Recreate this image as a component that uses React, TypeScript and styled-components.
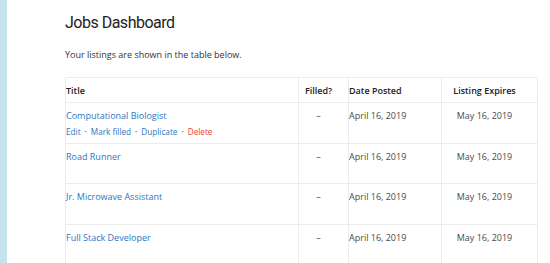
import styled, { createGlobalStyle } from 'styled-components';

const GlobalStyle = createGlobalStyle`
    body {
        margin: 0;
        background: #fff;
        font-family: "Open Sans", "Liberation Sans", sans-serif;
    }
`

const Page = styled.div`
    display: flex;
    min-height: 263px;
`

const SideStrip = styled.div`
    width: 7px;
    flex-shrink: 0;
    background: #c4e3ee;
`

const Content = styled.main`
    flex: 1;
    padding: 11px 13px 0 58px;
`

const Heading = styled.h1`
    margin: 0;
    font-family: Roboto, "Liberation Sans", sans-serif;
    font-weight: 400;
    font-size: 16px;
    letter-spacing: -0.5px;
    line-height: 24px;
    color: #222;
`

const Intro = styled.p`
    margin: 12px 0 14px 0;
    font-size: 9px;
    line-height: 16px;
    color: #333;
`

const Table = styled.table`
    width: 472px;
    border-collapse: collapse;
    table-layout: fixed;
    font-size: 9px;
    color: #4a4a4a;
`

const HeadCell = styled.th<{ $w: number; $align?: string }>`
    box-sizing: border-box;
    width: ${p => p.$w}px;
    height: 25px;
    padding: 0 ${p => (p.$align === 'center' ? '10px' : '0')} 0 0;
    border: 1px solid #ececec;
    text-align: ${p => p.$align || 'left'};
    font-weight: 600;
    color: #222;
`

const Cell = styled.td<{ $align?: string }>`
    box-sizing: border-box;
    height: 40.6px;
    padding: 5px ${p => (p.$align === 'center' ? '10px' : '0')} 0 0;
    vertical-align: top;
    border: 1px solid #ececec;
    text-align: ${p => p.$align || 'left'};
    line-height: 16px;
`

const JobLink = styled.a`
    color: #2d76c2;
    text-decoration: none;
`

const Actions = styled.ul`
    display: flex;
    margin: 0;
    padding: 0;
    list-style: none;
    font-size: 8.2px;
    line-height: 16px;
`

const ActionItem = styled.li`
    &:not(:last-child)::after {
        content: "•";
        color: #777;
        font-size: 6px;
        margin: 0 4px;
        vertical-align: 1px;
    }
`

const ActionLink = styled.a<{ $danger?: boolean }>`
    color: ${p => (p.$danger ? '#ee3b3b' : '#2d76c2')};
    text-decoration: none;
`

const jobs = [
    { id: 1, title: 'Computational Biologist', actions: true },
    { id: 2, title: 'Road Runner', actions: false },
    { id: 3, title: 'Jr. Microwave Assistant', actions: false },
    { id: 4, title: 'Full Stack Developer', actions: false },
]

export default function App() {
    return (
        <Page>
            <GlobalStyle />
            <SideStrip />
            <Content>
                <Heading>Jobs Dashboard</Heading>
                <Intro>Your listings are shown in the table below.</Intro>
                <Table>
                    <thead>
                        <tr>
                            <HeadCell $w={233}>Title</HeadCell>
                            <HeadCell $w={50} $align="center">Filled?</HeadCell>
                            <HeadCell $w={93}>Date Posted</HeadCell>
                            <HeadCell $w={96} $align="center">Listing Expires</HeadCell>
                        </tr>
                    </thead>
                    <tbody>
                        {jobs.map(job =>
                            <tr key={job.id}>
                                <Cell>
                                    <JobLink href="#">{job.title}</JobLink>
                                    {job.actions &&
                                        <Actions>
                                            <ActionItem><ActionLink href="#">Edit</ActionLink></ActionItem>
                                            <ActionItem><ActionLink href="#">Mark filled</ActionLink></ActionItem>
                                            <ActionItem><ActionLink href="#">Duplicate</ActionLink></ActionItem>
                                            <ActionItem><ActionLink href="#" $danger>Delete</ActionLink></ActionItem>
                                        </Actions>
                                    }
                                </Cell>
                                <Cell $align="center">–</Cell>
                                <Cell>April 16, 2019</Cell>
                                <Cell $align="center">May 16, 2019</Cell>
                            </tr>
                        )}
                    </tbody>
                </Table>
            </Content>
        </Page>
    );
}
